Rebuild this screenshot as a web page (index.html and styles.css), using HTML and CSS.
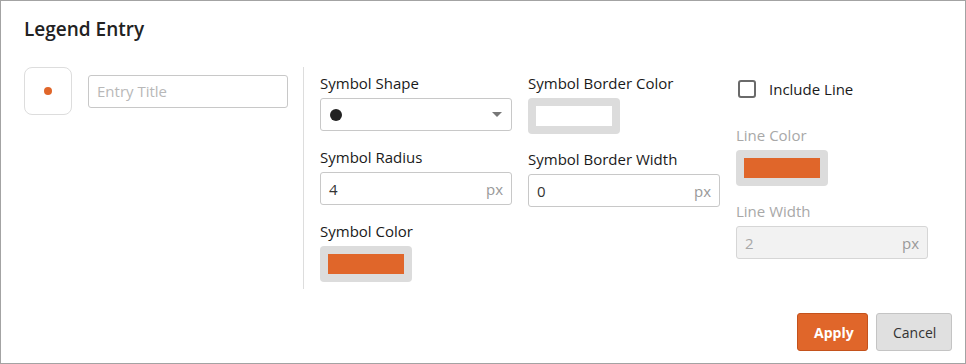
FILE: index.html
```html
<!DOCTYPE html>
<html lang="en">
<head>
    <meta charset="UTF-8">
    <meta name="viewport" content="width=device-width, initial-scale=1.0">
    <link rel="stylesheet" href="styles.css">
</head>
<body>
    <div class="dialog">
        <h1 class="dialog-title">Legend Entry</h1>

        <div class="dialog-body">
            <div class="entry-head">
                <div class="symbol-preview"><span class="preview-dot"></span></div>
                <input class="text-input title-input" type="text" placeholder="Entry Title">
            </div>

            <div class="divider"></div>

            <div class="field-column">
                <label class="field-label">Symbol Shape</label>
                <div class="select-box">
                    <span class="shape-dot"></span>
                    <span class="select-arrow"></span>
                </div>
                <label class="field-label">Symbol Radius</label>
                <div class="unit-input">
                    <span class="unit-value">4</span>
                    <span class="unit">px</span>
                </div>
                <label class="field-label">Symbol Color</label>
                <div class="swatch"><span class="swatch-fill orange"></span></div>
            </div>

            <div class="field-column">
                <label class="field-label">Symbol Border Color</label>
                <div class="swatch"><span class="swatch-fill white"></span></div>
                <label class="field-label">Symbol Border Width</label>
                <div class="unit-input">
                    <span class="unit-value">0</span>
                    <span class="unit">px</span>
                </div>
            </div>

            <div class="field-column">
                <label class="check-row"><span class="checkbox"></span> Include Line</label>
                <label class="field-label muted">Line Color</label>
                <div class="swatch"><span class="swatch-fill orange"></span></div>
                <label class="field-label muted">Line Width</label>
                <div class="unit-input disabled">
                    <span class="unit-value">2</span>
                    <span class="unit">px</span>
                </div>
            </div>
        </div>

        <div class="dialog-footer">
            <button class="btn btn-primary">Apply</button>
            <button class="btn btn-default">Cancel</button>
        </div>
    </div>
</body>
</html>
```

FILE: styles.css
```css
body {
    margin: 0;
    font-family: "Open Sans", "Noto Sans", sans-serif;
    background: #ffffff;
}
.dialog {
    width: 964px;
    height: 362px;
    border: 1px solid #a3a3a3;
    position: relative;
    color: #222222;
}
.dialog-title {
    margin: 0;
    padding: 15px 0 0 23px;
    font-size: 19px;
    font-weight: 600;
    line-height: 26px;
    color: #222222;
}
.dialog-body {
    display: flex;
    align-items: flex-start;
    padding: 25px 0 0 23px;
}
.entry-head {
    display: flex;
    align-items: center;
}
.symbol-preview {
    width: 46px;
    height: 46px;
    border: 1px solid #dddddd;
    border-radius: 8px;
    display: flex;
    align-items: center;
    justify-content: center;
}
.preview-dot {
    width: 8px;
    height: 8px;
    border-radius: 50%;
    background: #e0662a;
}
.text-input {
    font-family: inherit;
    font-size: 15px;
    box-sizing: border-box;
    border: 1px solid #c8c8c8;
    border-radius: 3px;
    height: 33px;
    padding: 0 8px;
    outline: none;
}
.text-input::placeholder {
    color: #b8b8b8;
}
.title-input {
    width: 200px;
    margin-left: 16px;
}
.divider {
    width: 1px;
    height: 222px;
    background: #dddddd;
    margin: 0 16px 0 15px;
}
.field-column {
    width: 192px;
    margin-right: 16px;
    display: flex;
    flex-direction: column;
    padding-top: 6px;
}
.field-label {
    font-size: 15px;
    font-weight: 400;
    color: #1a1a1a;
    line-height: 20px;
    margin-bottom: 5px;
}
.field-label.muted {
    color: #a8a8a8;
}
.select-box,
.unit-input {
    box-sizing: border-box;
    height: 33px;
    border: 1px solid #c8c8c8;
    border-radius: 3px;
    display: flex;
    align-items: center;
    justify-content: space-between;
    padding: 0 8px 0 8px;
    margin-bottom: 16px;
}
.shape-dot {
    width: 12px;
    height: 12px;
    border-radius: 50%;
    background: #222222;
    margin-left: 1px;
}
.select-arrow {
    width: 0;
    height: 0;
    border-left: 5px solid transparent;
    border-right: 5px solid transparent;
    border-top: 5px solid #777777;
    margin-right: 1px;
}
.unit-value {
    font-size: 15px;
    color: #333333;
}
.unit {
    font-size: 15px;
    color: #999999;
}
.unit-input.disabled {
    background: #f2f2f2;
    border-color: #d6d6d6;
}
.unit-input.disabled .unit-value {
    color: #a8a8a8;
}
.swatch {
    width: 92px;
    height: 36px;
    box-sizing: border-box;
    padding: 8px;
    background: #dcdcdc;
    border-radius: 4px;
    margin-bottom: 15px;
}
.swatch-fill {
    display: block;
    width: 100%;
    height: 100%;
}
.swatch-fill.orange {
    background: #e0662a;
}
.swatch-fill.white {
    background: #ffffff;
}
.check-row {
    display: flex;
    align-items: center;
    font-size: 15px;
    font-weight: 400;
    color: #1a1a1a;
    height: 20px;
    margin: 6px 0 26px 2px;
}
.checkbox {
    width: 14px;
    height: 14px;
    border: 2px solid #6a6a6a;
    border-radius: 3px;
    margin-right: 13px;
}
.dialog-footer {
    position: absolute;
    right: 13px;
    bottom: 12px;
    display: flex;
    gap: 8px;
}
.btn {
    font-family: inherit;
    font-size: 14px;
    height: 38px;
    border-radius: 3px;
    padding: 0 16px;
    cursor: pointer;
}
.btn-primary {
    background: #e0662a;
    border: 1px solid #c4521c;
    color: #ffffff;
    font-weight: 700;
    width: 71px;
}
.btn-default {
    background: #e0e0e0;
    border: 1px solid #c4c4c4;
    color: #333333;
    width: 76px;
}
```
